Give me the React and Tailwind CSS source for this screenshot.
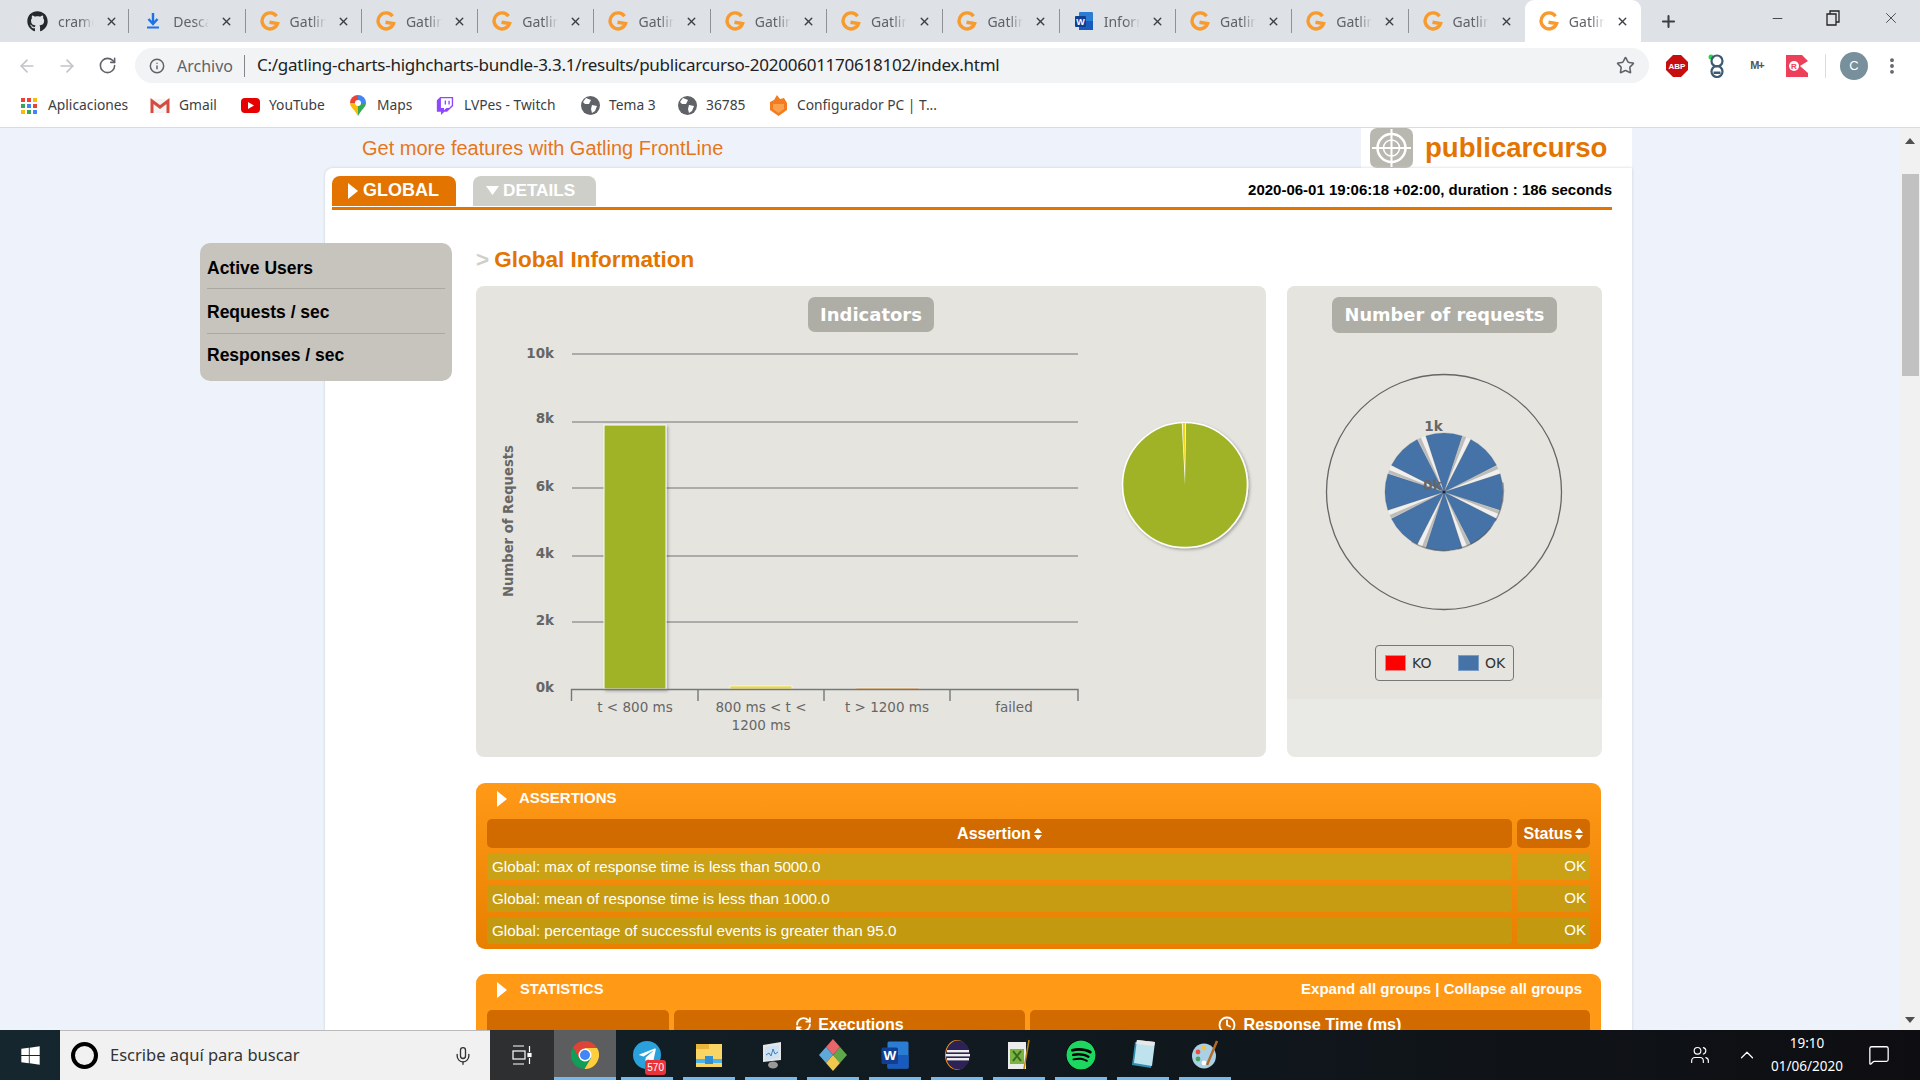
import React from 'react';
import { ArrowLeft, ArrowRight, RotateCw, Info, Star, X, Plus, Minus, MoreVertical, ChevronUp, Mic, Users, MessageSquare, RefreshCw, Clock } from 'lucide-react';
import { FaGithub, FaWindows, FaSpotify, FaTelegramPlane, FaTwitch } from 'react-icons/fa';

const G = () => (
  <svg width="20" height="20" viewBox="0 0 20 20" className="shrink-0">
    <path d="M16.5 5.2 A8 8 0 1 0 17.6 12.5 L9.5 11.2" fill="none" stroke="#f79b2e" strokeWidth="3.4" />
  </svg>
);
const DownloadIco = () => (
  <svg width="20" height="20" viewBox="0 0 20 20" className="shrink-0">
    <path d="M10 2 V11 M5.5 8 L10 13 L14.5 8" fill="none" stroke="#1a73e8" strokeWidth="2.4" />
    <rect x="4" y="15.5" width="12" height="2" fill="#1a73e8" />
  </svg>
);
const WordIco = ({ s = 20 }) => (
  <svg width={s} height={s} viewBox="0 0 20 20" className="shrink-0">
    <rect x="5" y="1" width="14" height="18" rx="1" fill="#2b7cd3" />
    <rect x="5" y="10" width="14" height="9" fill="#185abd" />
    <rect x="1" y="5" width="11" height="11" rx="1" fill="#103f91" />
    <text x="6.5" y="13.6" textAnchor="middle" fontSize="9" fontWeight="700" fill="#fff" fontFamily="Liberation Sans">W</text>
  </svg>
);

const tabs = [
  { icon: <FaGithub className="w-[21px] h-[21px] text-[#24292e] shrink-0" />, t: 'cramer' },
  { icon: <DownloadIco />, t: 'Descar' },
  ...Array(7).fill({ icon: <G />, t: 'Gatling' }),
  { icon: <WordIco />, t: 'Inform' },
  ...Array(3).fill({ icon: <G />, t: 'Gatling' }),
  { icon: <G />, t: 'Gatling', active: true },
];

const AppsIco = () => {
  const c = ['#ea4335', '#ea4335', '#fbbc05', '#34a853', '#4285f4', '#ea4335', '#fbbc05', '#34a853', '#4285f4'];
  return <div className="grid grid-cols-3 gap-[2px] w-[17px] shrink-0">{c.map((x, i) => <span key={i} className="w-[4px] h-[4px]" style={{ background: x }} />)}</div>;
};
const GmailIco = () => (
  <svg width="20" height="16" viewBox="0 0 20 16">
    <rect x="1" y="1" width="18" height="14" fill="#f4f4f4" />
    <path d="M2 15 V3 L10 9 L18 3 V15" fill="none" stroke="#d54c3f" strokeWidth="3" />
  </svg>
);
const YtIco = () => (
  <svg width="19" height="15" viewBox="0 0 19 15">
    <rect width="19" height="15" rx="4" fill="#e60000" />
    <path d="M7 4 L13 7.5 L7 11 Z" fill="#fff" />
  </svg>
);
const MapsIco = () => (
  <svg width="16" height="21" viewBox="0 0 16 21">
    <path d="M8 0 A8 8 0 0 1 16 8 L8 8 Z" fill="#4285f4" />
    <path d="M8 0 A8 8 0 0 0 0 8 L8 8 Z" fill="#ea4335" />
    <path d="M0 8 C0 12 5 15 8 21 L8 8 Z" fill="#fbbc05" />
    <path d="M16 8 C16 12 11 15 8 21 L8 8 Z" fill="#34a853" />
    <circle cx="8" cy="8" r="3" fill="#fff" />
  </svg>
);
const FireIco = () => (
  <svg width="19" height="21" viewBox="0 0 19 21">
    <path d="M8 0 L11 4 L15 3 L18 8 V15 L9.5 21 L1 15 V7 L5 5 Z" fill="#f47c20" />
    <path d="M4 9 H15 V14 L9.5 18 L4 14 Z" fill="#f9a24b" />
  </svg>
);
const GlobeIco = () => (
  <svg width="19" height="19" viewBox="0 0 19 19">
    <circle cx="9.5" cy="9.5" r="9.5" fill="#5f6368" />
    <path d="M5 2 L10 4 L8 8 L4 8 L2 6 Z M11 9 L16 10 L14 15 L11 17 L10 13 Z" fill="#fff" />
  </svg>
);
const marks = [
  { i: <AppsIco />, t: 'Aplicaciones', w: 130 },
  { i: <GmailIco />, t: 'Gmail', w: 90 },
  { i: <YtIco />, t: 'YouTube', w: 108 },
  { i: <MapsIco />, t: 'Maps', w: 87 },
  { i: <FaTwitch className="w-[18px] h-[20px] text-[#9146ff]" />, t: 'LVPes - Twitch', w: 145 },
  { i: <GlobeIco />, t: 'Tema 3', w: 97 },
  { i: <GlobeIco />, t: '36785', w: 91 },
  { i: <FireIco />, t: 'Configurador PC | T...', w: 180 },
];

const Play = ({ cls = '' }) => (
  <svg width="10" height="16" viewBox="0 0 10 16" className={cls}><path d="M0 0 L10 8 L0 16 Z" fill="#fff" /></svg>
);
const Sort = () => (
  <svg width="8" height="12" viewBox="0 0 8 12" className="inline-block ml-[3px]"><path d="M4 0 L8 5 H0 Z M0 7 H8 L4 12 Z" fill="#fff" /></svg>
);

const Target = () => (
  <svg width="43" height="40" viewBox="0 0 43 40">
    <rect width="43" height="40" rx="7" fill="#b9b8b0" />
    <g fill="none" stroke="#fff">
      <circle cx="21.5" cy="20" r="14" strokeWidth="2.5" />
      <circle cx="21.5" cy="20" r="8" strokeWidth="1.5" />
      <path d="M21.5 1 V39 M2 20 H41" strokeWidth="2" />
    </g>
  </svg>
);

const chartFont = '"DejaVu Sans", sans-serif';
const IndicatorsChart = () => {
  const ys = [[354, '10k', 358], [422, '8k', 423], [488, '6k', 491], [556, '4k', 558], [622, '2k', 625]];
  const sx = (a) => {
    const r = (a * Math.PI) / 180;
    return [1185 + 62 * Math.sin(r), 485 - 62 * Math.cos(r)];
  };
  const [ax, ay] = sx(-3);
  const [bx, by] = sx(1);
  const [cx2, cy2] = sx(-0.5);
  return (
    <svg viewBox="476 340 790 410" className="w-[790px] h-[410px] mt-[8px]">
      <defs>
        <filter id="sh" x="-10%" y="-10%" width="125%" height="125%">
          <feDropShadow dx="1.5" dy="1.5" stdDeviation="1.5" floodColor="#000" floodOpacity="0.3" />
        </filter>
      </defs>
      {ys.map(([y, l, ty]) => (
        <g key={l}>
          <line x1="572" x2="1078" y1={y} y2={y} stroke="#999" strokeWidth="1.3" />
          <text x="554" y={ty} textAnchor="end" fontFamily={chartFont} fontWeight="700" fontSize="13.5" fill="#666">{l}</text>
        </g>
      ))}
      <text x="554" y="692" textAnchor="end" fontFamily={chartFont} fontWeight="700" fontSize="13.5" fill="#666">0k</text>
      <text transform="translate(513 521) rotate(-90)" textAnchor="middle" fontFamily={chartFont} fontWeight="700" fontSize="13.2" fill="#666">Number of Requests</text>
      <rect x="604" y="425" width="62" height="264" fill="#a0b228" stroke="#fff" strokeWidth="1" filter="url(#sh)" />
      <rect x="730" y="686" width="62" height="3" fill="#e8d84a" stroke="#fff" strokeWidth="0.6" />
      <rect x="856" y="687.5" width="63" height="2" fill="#f5c78e" stroke="#fff" strokeWidth="0.4" />
      <path d="M571.5 701 V689.5 H1078 V701 M698 689.5 V701 M824 689.5 V701 M950 689.5 V701" fill="none" stroke="#777" strokeWidth="1.4" />
      <g fontFamily={chartFont} fontSize="13.5" fill="#666" textAnchor="middle">
        <text x="635" y="712">t &lt; 800 ms</text>
        <text x="761" y="712">800 ms &lt; t &lt;</text>
        <text x="761" y="730">1200 ms</text>
        <text x="887" y="712">t &gt; 1200 ms</text>
        <text x="1014" y="712">failed</text>
      </g>
      <circle cx="1185" cy="485" r="62.5" fill="#a0b228" stroke="#fff" strokeWidth="1.6" filter="url(#sh)" />
      <path d={`M1185 485 L${ax} ${ay} L${bx} ${by} Z`} fill="#fff" />
      <path d={`M1184.6 470 L${ax + 0.8} ${ay} L${cx2 + 0.8} ${cy2} Z`} fill="#f2d21b" />
    </svg>
  );
};

const PolarChart = () => {
  const cx = 1444, cy = 492, r = 59;
  const p = (a, rr = r) => {
    const t = (a * Math.PI) / 180;
    return `${cx + rr * Math.sin(t)} ${cy - rr * Math.cos(t)}`;
  };
  const an = [0, 45, 90, 135, 180, 225, 270, 315];
  return (
    <svg viewBox="1287 340 315 275" className="w-[315px] h-[275px]">
      <circle cx={cx} cy={cy} r="117.5" fill="none" stroke="#666" strokeWidth="1.3" />
      {an.map((a) => (
        <g key={`g${a}`}>
          <path d={`M${cx} ${cy} L${p(a + 18)} L${p(a + 27)} Z`} fill="#f1f0ee" />
          <path d={`M${cx} ${cy} L${p(a + 18.5)} L${p(a + 22)} Z`} fill="#9a9a98" opacity="0.6" />
        </g>
      ))}
      {an.map((a) => (
        <path key={a} d={`M${cx} ${cy} L${p(a - 18)} A${r} ${r} 0 0 1 ${p(a + 18)} Z`} fill="#4572a7" stroke="#555" strokeOpacity="0.25" strokeWidth="0.8" />
      ))}
      <path d={`M${p(80)} A60 60 0 0 1 ${p(215)}`} fill="none" stroke="#555" strokeOpacity="0.5" strokeWidth="1.4" transform="translate(0.8 0.8)" strokeDasharray="40 8" />
      <circle cx={cx} cy={cy} r="1.6" fill="#1a2430" />
      <text x="1433.5" y="431" textAnchor="middle" fontFamily={chartFont} fontWeight="700" fontSize="13.5" fill="#666">1k</text>
      <text x="1432.5" y="490" textAnchor="middle" fontFamily={chartFont} fontWeight="700" fontSize="13.5" fill="#666">0k</text>
    </svg>
  );
};

const ChromeIco = () => (
  <svg width="28" height="28" viewBox="0 0 28 28">
    <path d="M14 14 L26.1 7 A14 14 0 0 0 2 6.5 L8 17 Z" fill="#db4437" />
    <path d="M14 14 L8 17 L2 6.5 A14 14 0 0 0 13.5 28 L20 17 Z" fill="#0f9d58" />
    <path d="M14 14 L20 17 L13.5 28 A14 14 0 0 0 26.1 7 L14 7 Z" fill="#ffcd40" />
    <circle cx="14" cy="14" r="6.5" fill="#fff" />
    <circle cx="14" cy="14" r="5" fill="#4285f4" />
  </svg>
);
const taskIcons = [
  <ChromeIco />,
  <div className="relative w-[28px] h-[28px] rounded-full bg-[#2aa1da] flex items-center justify-center">
    <FaTelegramPlane className="w-[19px] h-[19px] text-white" />
    <span className="absolute -right-[5px] -bottom-[6px] bg-[#e8333a] text-white text-[10px] leading-[15px] rounded-[3px] px-[2px] font-['Liberation_Sans',sans-serif]">570</span>
  </div>,
  <svg width="28" height="26" viewBox="0 0 28 26">
    <rect x="1" y="2" width="26" height="23" fill="#f9d566" />
    <rect x="1" y="2" width="13" height="5" fill="#e9b53a" />
    <rect x="1" y="17" width="26" height="4" fill="#4fb3e8" />
    <rect x="10" y="14" width="8" height="8" fill="#2e8fd4" />
  </svg>,
  <svg width="30" height="28" viewBox="0 0 30 28">
    <path d="M7 4 L25 1 V19 L7 21 Z" fill="#e6e6e6" />
    <path d="M9 6 L23 4 V17 L9 19 Z" fill="#cfe2f1" />
    <path d="M10 14 L13 12 L15 15 L17 8 L19 13 L22 11" fill="none" stroke="#3f7fbf" strokeWidth="1" />
    <ellipse cx="17" cy="24" rx="5" ry="3.5" fill="#999" />
  </svg>,
  <svg width="30" height="32" viewBox="0 0 30 32">
    <path d="M15 0 L22 8 L15 16 L8 8 Z" fill="#e8656a" />
    <path d="M8 8 L15 16 L8 24 L1 16 Z" fill="#5fa8d8" />
    <path d="M22 8 L29 16 L22 24 L15 16 Z" fill="#5fa84a" />
    <path d="M15 16 L22 24 L15 32 L8 24 Z" fill="#f0c850" />
  </svg>,
  <WordIco s={30} />,
  <svg width="28" height="30" viewBox="0 0 28 30">
    <ellipse cx="14" cy="15" rx="12" ry="15" fill="#f7941e" />
    <ellipse cx="15" cy="15" rx="12" ry="14.5" fill="#2c2255" />
    <rect x="4" y="10" width="22" height="2.4" fill="#eee" />
    <rect x="3" y="14" width="24" height="2.4" fill="#eee" />
    <rect x="4" y="18" width="22" height="2.4" fill="#eee" />
  </svg>,
  <svg width="28" height="32" viewBox="0 0 28 32">
    <rect x="3" y="3" width="18" height="27" fill="#ececec" />
    <rect x="5" y="10" width="14" height="15" fill="#7cb342" />
    <path d="M8 12 L16 22 M16 12 L8 22" stroke="#33691e" strokeWidth="2" />
    <path d="M24 1 L19 30" stroke="#b8860b" strokeWidth="1.5" />
  </svg>,
  <FaSpotify className="w-[30px] h-[30px] text-[#1ed760] bg-black rounded-full" />,
  <svg width="28" height="30" viewBox="0 0 28 30">
    <path d="M6 2 L24 4 L22 28 L3 25 Z" fill="#2f8fb0" />
    <path d="M8 0 L26 2 L23 26 L5 23 Z" fill="#bfe3ee" />
    <path d="M8 0 L26 2 L25 6 L7 4 Z" fill="#e8e8e8" />
  </svg>,
  <svg width="30" height="32" viewBox="0 0 30 32">
    <ellipse cx="14" cy="17" rx="12" ry="12.5" fill="#a8d0e6" />
    <circle cx="8" cy="13" r="2.4" fill="#e84d3d" />
    <circle cx="14" cy="9" r="2.4" fill="#f6c344" />
    <circle cx="8" cy="20" r="2.4" fill="#46a35e" />
    <circle cx="14" cy="24" r="2.4" fill="#fff" />
    <path d="M27 2 L17 26" stroke="#b96a22" strokeWidth="2.4" />
  </svg>,
];

export default function App() {
  return (
    <div className="w-[1920px] h-[1080px] overflow-hidden flex flex-col bg-white font-['Liberation_Sans',Arial,sans-serif]">
      {/* tab strip */}
      <div className="h-[42px] shrink-0 bg-[#dee1e6] flex pl-[13px] items-stretch">
        {tabs.map((t, i) => (
          <div key={i} className={`w-[116.3px] shrink-0 flex items-center pl-[14px] relative ${t.active ? 'bg-white rounded-t-[9px]' : ''}`}>
            {t.icon}
            <span className="ml-[10px] w-[36px] overflow-hidden whitespace-nowrap text-[14px] text-[#5f6368] font-['Noto_Sans',sans-serif] [mask-image:linear-gradient(to_right,black_60%,transparent)]">{t.t}</span>
            <X className="ml-[11px] w-[13px] h-[13px] text-[#3c4043]" strokeWidth={2.6} />
            {!t.active && i !== 12 && <span className="absolute right-0 top-[9px] h-[24px] w-px bg-[#8e9196]" />}
          </div>
        ))}
        <Plus className="ml-[18px] self-center w-[19px] h-[19px] text-[#3c4043]" strokeWidth={2.6} />
        <div className="ml-auto flex items-center pb-[6px]">
          <Minus className="w-[15px] h-[15px] text-[#333]" strokeWidth={1.4} />
          <svg width="14" height="16" viewBox="0 0 14 16" className="ml-[41px] mr-[42px]"><path d="M1 4 H10 V15 H1 Z M4 4 V1 H13 V12 H10" fill="none" stroke="#222" strokeWidth="1.3" /></svg>
          <X className="w-[18px] h-[18px] mr-[20px] text-[#333]" strokeWidth={1.1} />
        </div>
      </div>
      {/* toolbar */}
      <div className="h-[42px] shrink-0 bg-white flex items-center relative pt-[5px]">
        <ArrowLeft className="ml-[17px] w-[20px] h-[20px] text-[#c2c4c7]" strokeWidth={2} />
        <ArrowRight className="ml-[20px] w-[20px] h-[20px] text-[#c2c4c7]" strokeWidth={2} />
        <RotateCw className="ml-[21px] w-[19px] h-[19px] text-[#5f6368]" strokeWidth={2} />
        <div className="ml-[18px] w-[1514px] h-[35px] rounded-full bg-[#f1f3f4] flex items-center pl-[14px] font-['Noto_Sans',sans-serif]">
          <Info className="w-[16px] h-[16px] text-[#5f6368]" strokeWidth={2.2} />
          <span className="ml-[12px] text-[16px] text-[#5f6368] w-[58px] whitespace-nowrap">Archivo</span>
          <span className="ml-[9px] h-[22px] w-px bg-[#80868b]" />
          <span className="ml-[12px] pb-[2px] text-[17px] text-[#202124] whitespace-nowrap tracking-[-0.25px]">C:/gatling-charts-highcharts-bundle-3.3.1/results/publicarcurso-20200601170618102/index.html</span>
          <Star className="ml-auto mr-[14px] w-[19px] h-[19px] text-[#5f6368]" strokeWidth={2} />
        </div>
        <div className="ml-[8px] flex items-center">
          <span className="w-[40px] flex justify-center">
            <svg width="22" height="22" viewBox="0 0 22 22"><path d="M7 0 H15 L22 7 V15 L15 22 H7 L0 15 V7 Z" fill="#c70d0d" /><text x="11" y="14" textAnchor="middle" fontSize="8" fontWeight="700" fill="#fff" fontFamily="Liberation Sans">ABP</text></svg>
          </span>
          <span className="w-[40px] flex justify-center">
            <svg width="18" height="24" viewBox="0 0 18 24"><circle cx="3" cy="3" r="2.5" fill="#22d64a" /><circle cx="9" cy="7" r="5.5" fill="none" stroke="#3d5a73" strokeWidth="2.2" /><circle cx="9" cy="17.5" r="5.5" fill="none" stroke="#3d5a73" strokeWidth="2.2" /><rect x="5.5" y="17.5" width="7" height="2.5" fill="#3d5a73" /></svg>
          </span>
          <span className="w-[40px] flex justify-center text-[11px] font-bold text-[#555] tracking-[-1px]">M+</span>
          <span className="w-[40px] flex justify-center">
            <svg width="22" height="22" viewBox="0 0 22 22"><path d="M0 0 H16 L22 6 L14 11 L22 18 V22 H0 Z" fill="#ed3f5a" /><circle cx="8" cy="11" r="5" fill="#fff" /><text x="8" y="14" textAnchor="middle" fontSize="8" fontWeight="700" fill="#ed3f5a" fontFamily="Liberation Sans">R</text></svg>
          </span>
          <span className="ml-[8px] w-px h-[24px] bg-[#dadce0]" />
          <span className="ml-[14px] w-[28px] h-[28px] rounded-full bg-[#78909c] text-white text-[13px] flex items-center justify-center">C</span>
          <MoreVertical className="ml-[14px] w-[20px] h-[20px] text-[#5f6368]" strokeWidth={2.6} />
        </div>
      </div>
      {/* bookmarks */}
      <div className="h-[44px] shrink-0 bg-white flex items-center border-b border-[#dadce0] font-['Noto_Sans',sans-serif]">
        {marks.map((m, i) => (
          <div key={i} className="shrink-0 flex items-center relative h-full" style={{ width: m.w, paddingLeft: i === 0 ? 19 : 20 }}>
            <span className="w-[20px] flex justify-center shrink-0">{m.i}</span>
            <span className="text-[13.8px] text-[#3c4043] whitespace-nowrap ml-[9px]">{m.t}</span>
          </div>
        ))}
      </div>
      {/* page */}
      <div className="flex-1 min-h-0 flex bg-[#eef3fb] relative overflow-hidden">
        <div className="flex-1 min-w-0 flex flex-col">
          <div className="h-[40px] shrink-0 flex w-[1632px]">
            <span className="ml-[362px] self-center text-[20px] text-[#e6761a]">Get more features with Gatling FrontLine</span>
            <div className="ml-auto w-[271px] bg-white flex items-center pl-[9px]">
              <Target />
              <span className="ml-[12px] text-[27.6px] font-bold text-[#e37400]">publicarcurso</span>
            </div>
          </div>
          <div className="flex-1 ml-[325px] w-[1307px] bg-white rounded-tl-[8px] shadow-[0_0_3px_#c9ced6] pl-[7px] pt-[8px] flex flex-col">
            <div className="h-[30px] w-[1280px] flex items-stretch shrink-0">
              <div className="w-[124px] bg-[#e37400] rounded-t-[8px] flex items-center pl-[16px] pb-[1px] text-white font-bold text-[18px]">
                <Play cls="mr-[5px]" />GLOBAL
              </div>
              <div className="ml-[17px] w-[123px] bg-[#cfcfca] rounded-t-[8px] flex items-center pl-[13px] pb-[1px] text-white font-bold text-[17.2px]">
                <svg width="13" height="9" viewBox="0 0 13 9" className="mr-[4px]"><path d="M0 0 H13 L6.5 9 Z" fill="#fff" /></svg>DETAILS
              </div>
              <span className="ml-auto self-center pb-[2px] text-[15px] font-bold text-black">2020-06-01 19:06:18 +02:00, duration : 186 seconds</span>
            </div>
            <div className="mt-[1px] h-[3px] w-[1280px] bg-[#e37400] shrink-0" />
            <div className="mt-[35px] ml-[144px] h-[30px] shrink-0 flex items-center text-[22.5px] font-bold">
              <span className="text-[#cfcfca] mr-[5px]">&gt;</span>
              <span className="text-[#e37400]">Global Information</span>
            </div>
            <div className="mt-[11px] ml-[144px] w-[1126px] h-[471px] flex gap-[21px] shrink-0">
              <div className="w-[790px] bg-[#e5e4df] rounded-[8px] flex flex-col items-center pt-[11px]">
                <div className="w-[126px] h-[35px] rounded-[7px] bg-[#aeada6] text-white font-bold text-[18px] flex items-center justify-center font-['DejaVu_Sans',sans-serif]">Indicators</div>
                <IndicatorsChart />
              </div>
              <div className="w-[315px] rounded-[8px] bg-[#e9e9e6] overflow-hidden flex flex-col">
                <div className="h-[413px] bg-[#e5e4df] flex flex-col items-center pt-[11px]">
                  <div className="w-[225px] h-[36px] rounded-[7px] bg-[#aeada6] text-white font-bold text-[17.8px] flex items-center justify-center font-['DejaVu_Sans',sans-serif] whitespace-nowrap">Number of requests</div>
                  <div className="mt-[7px] h-[275px]"><PolarChart /></div>
                  <div className="mt-[30px] w-[139px] h-[36px] rounded-[4px] border border-[#777] flex items-center pl-[9px] text-[14px] text-[#333] font-['DejaVu_Sans',sans-serif]">
                    <span className="w-[21px] h-[16px] bg-[#ff0000] border border-[#f08080]" />
                    <span className="ml-[6px] w-[46px]">KO</span>
                    <span className="w-[21px] h-[16px] bg-[#4572a7] border border-[#7d9cc4]" />
                    <span className="ml-[6px]">OK</span>
                  </div>
                </div>
              </div>
            </div>
            {/* assertions */}
            <div className="mt-[26px] ml-[144px] w-[1125px] h-[166px] shrink-0 rounded-[9px] px-[11px] bg-gradient-to-b from-[#ff9916] to-[#e97f00] text-white">
              <div className="h-[36px] flex items-center pl-[10px] pb-[5px]">
                <Play />
                <span className="ml-[12px] text-[15px] font-bold">ASSERTIONS</span>
              </div>
              <div className="grid grid-cols-[1025px_73px] gap-x-[5px] gap-y-[5px]">
                <div className="h-[29px] rounded-[5px] bg-[#d16b00] flex items-center justify-center font-bold text-[16px]">Assertion<Sort /></div>
                <div className="h-[29px] rounded-[5px] bg-[#d16b00] flex items-center justify-center font-bold text-[16px]">Status<Sort /></div>
                {[
                  ['Global: max of response time is less than 5000.0', 'bg-[#cba115]'],
                  ['Global: mean of response time is less than 1000.0', 'bg-[#c89c12]'],
                  ['Global: percentage of successful events is greater than 95.0', 'bg-[#c3990f]'],
                ].map(([t, c]) => (
                  <React.Fragment key={t}>
                    <div className={`h-[27px] rounded-[4px] ${c} flex items-center pl-[5px] pt-[1px] text-[15.2px]`}>{t}</div>
                    <div className={`h-[27px] rounded-[4px] ${c} flex items-center justify-end pr-[4px] text-[15px]`}>OK</div>
                  </React.Fragment>
                ))}
              </div>
            </div>
            {/* statistics */}
            <div className="mt-[25px] ml-[144px] w-[1125px] h-[300px] shrink-0 rounded-t-[9px] px-[11px] bg-[#ff9916] text-white">
              <div className="h-[36px] flex items-center pl-[10px] pb-[5px]">
                <Play />
                <span className="ml-[13px] text-[14.7px] font-bold">STATISTICS</span>
                <span className="ml-auto mr-[8px] text-[15px] font-bold">Expand all groups | Collapse all groups</span>
              </div>
              <div className="flex gap-[5px]">
                <div className="w-[182px] h-[40px] rounded-[5px] bg-[#d16b00]" />
                <div className="w-[351px] h-[40px] rounded-[5px] bg-[#d16b00] flex items-center justify-center font-bold text-[16px] pb-[11px]">
                  <RefreshCw className="w-[17px] h-[17px] mr-[6px]" strokeWidth={2.6} />Executions
                </div>
                <div className="w-[560px] h-[40px] rounded-[5px] bg-[#d16b00] flex items-center justify-center font-bold text-[16.2px] pb-[11px]">
                  <Clock className="w-[18px] h-[18px] mr-[7px]" strokeWidth={2.4} />Response Time (ms)
                </div>
              </div>
            </div>
          </div>
        </div>
        {/* scrollbar */}
        <div className="w-[20px] shrink-0 bg-[#f1f1f1] flex flex-col items-center justify-between">
          <div className="w-full flex flex-col items-center">
            <svg width="10" height="6" viewBox="0 0 10 6" className="mt-[10px]"><path d="M0 6 L5 0 L10 6 Z" fill="#505050" /></svg>
            <div className="mt-[30px] w-[17px] h-[202px] bg-[#c1c1c1]" />
          </div>
          <svg width="10" height="6" viewBox="0 0 10 6" className="mb-[7px]"><path d="M0 0 L5 6 L10 0 Z" fill="#505050" /></svg>
        </div>
        {/* side menu */}
        <div className="absolute left-[200px] top-[115px] w-[252px] h-[138px] rounded-[10px] bg-[#c7c4be] px-[7px] text-black font-bold text-[17.5px]">
          <div className="h-[46px] flex items-center border-b border-[#aaa8a2] pt-[5px]">Active Users</div>
          <div className="h-[45px] flex items-center border-b border-[#aaa8a2] pt-[2px]">Requests / sec</div>
          <div className="h-[43px] flex items-center">Responses / sec</div>
        </div>
      </div>
      {/* taskbar */}
      <div className="h-[50px] shrink-0 flex items-stretch bg-gradient-to-r from-[#15262e] via-[#101a20] to-[#0e0e12] relative">
        <div className="w-[60px] flex items-center justify-center"><FaWindows className="w-[21px] h-[21px] text-white" /></div>
        <div className="w-[430px] bg-[#f1f1f1] border-t border-[#bbb] flex items-center pl-[11px] pr-[17px] font-['Noto_Sans',sans-serif]">
          <span className="w-[27px] h-[27px] rounded-full border-[4px] border-black" />
          <span className="ml-[12px] text-[16.5px] text-[#333]">Escribe aquí para buscar</span>
          <Mic className="ml-auto w-[20px] h-[20px] text-[#333]" strokeWidth={1.6} />
        </div>
        <div className="w-[64px] bg-[#2d2f31] flex items-center justify-center">
          <svg width="20" height="20" viewBox="0 0 20 20" fill="none" stroke="#fff" strokeWidth="1.2"><path d="M1 1 H12 M1 19 H12 M17.5 1 V7 M17.5 13 V19" /><rect x="1" y="6" width="12" height="8" /><rect x="16" y="8.5" width="3" height="3" fill="#fff" /></svg>
        </div>
        {taskIcons.map((ic, i) => (
          <div key={i} className={`w-[62px] relative flex items-center justify-center ${i === 0 ? 'bg-[#5b5d5e]' : ''}`}>
            {ic}
            <span className={`absolute bottom-0 h-[3px] bg-[#76b9ed] ${i === 0 ? 'left-0 right-0' : 'left-[5px] right-[5px]'}`} />
          </div>
        ))}
        <div className="ml-auto flex items-center text-white">
          <Users className="w-[20px] h-[20px]" strokeWidth={1.4} />
          <ChevronUp className="ml-[26px] w-[22px] h-[22px]" strokeWidth={1.3} />
          <div className="ml-[9px] w-[80px] flex flex-col items-center text-[13.5px] leading-[23px] font-['Noto_Sans',sans-serif]">
            <span>19:10</span>
            <span>01/06/2020</span>
          </div>
          <MessageSquare className="ml-[21px] mr-[30px] w-[22px] h-[22px]" strokeWidth={1.4} />
        </div>
      </div>
    </div>
  );
}
